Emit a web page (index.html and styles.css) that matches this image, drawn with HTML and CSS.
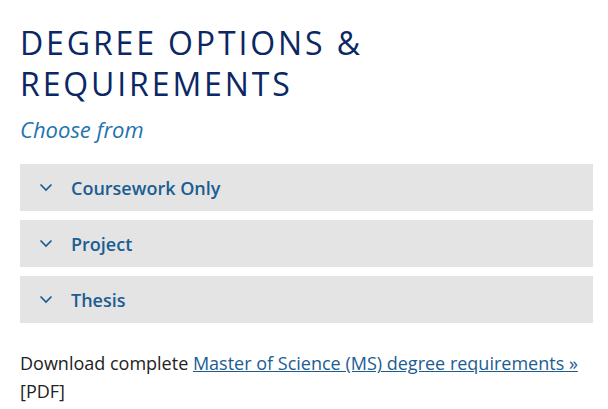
FILE: index.html
```html
<!DOCTYPE html>
<html lang="en">
<head>
  <meta charset="UTF-8">
  <meta name="viewport" content="width=device-width, initial-scale=1.0">
  <title>Degree Options &amp; Requirements</title>
  <link rel="stylesheet" href="styles.css">
</head>
<body>

<div class="contenido">
  <h2 class="titulo">Degree Options &amp; Requirements</h2>
  <p class="subtitulo">Choose from</p>

  <!-- Opciones del grado -->
  <div class="acordeon">
    <button class="opcion">
      <svg class="flecha" viewBox="0 0 14 9" width="14" height="9"><path d="M1.5 1.5 L7 7 L12.5 1.5" /></svg>
      <span>Coursework Only</span>
    </button>
    <button class="opcion">
      <svg class="flecha" viewBox="0 0 14 9" width="14" height="9"><path d="M1.5 1.5 L7 7 L12.5 1.5" /></svg>
      <span>Project</span>
    </button>
    <button class="opcion">
      <svg class="flecha" viewBox="0 0 14 9" width="14" height="9"><path d="M1.5 1.5 L7 7 L12.5 1.5" /></svg>
      <span>Thesis</span>
    </button>
  </div>

  <p class="descarga">Download complete <a href="#">Master of Science (MS) degree requirements &raquo;</a> [PDF]</p>
</div>

</body>
</html>
```

FILE: styles.css
```css
body {
  margin: 0;
  font-family: "Open Sans", "Noto Sans", sans-serif;
  background-color: #fff;
}

.contenido {
  padding: 22px 15px 0 20px;
}

.titulo {
  margin: 0;
  font-size: 32px;
  font-weight: 400;
  line-height: 41px;
  letter-spacing: 0.09em;
  text-transform: uppercase;
  color: #0b2764;
}

.subtitulo {
  margin: 10px 0 20px;
  font-size: 22px;
  font-style: italic;
  line-height: 30px;
  color: #1f74ae;
}

.acordeon {
  display: flex;
  flex-direction: column;
  gap: 9px;
}

.opcion {
  display: flex;
  align-items: center;
  gap: 18px;
  height: 47px;
  padding: 0 0 0 19px;
  border: none;
  background-color: #e4e4e4;
  font-family: inherit;
  font-size: 18px;
  font-weight: 600;
  color: #1b5d92;
  text-align: left;
  cursor: pointer;
}

.flecha {
  fill: none;
  stroke: #1b5d92;
  stroke-width: 1.7;
}

.descarga {
  margin: 26px 0 0;
  font-size: 18px;
  line-height: 28px;
  color: #222;
}

.descarga a {
  color: #1b5d92;
}
```
